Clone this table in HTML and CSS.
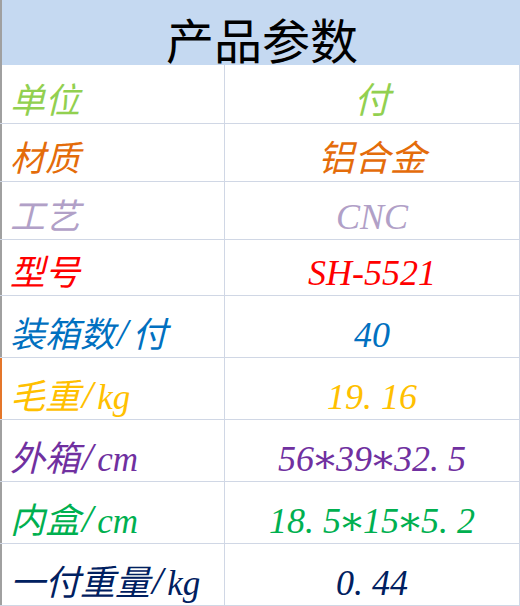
FILE: index.html
```html
<!DOCTYPE html>
<html lang="zh-CN">
<head>
<meta charset="utf-8">
<title>产品参数</title>
<link rel="stylesheet" href="styles.css">
</head>
<body>
<div class="sheet">
  <div class="head"><span class="title">产品参数</span></div>
  <div class="row r1 c-green"><div class="label">单位</div><div class="value">付</div></div>
  <div class="row c-orange"><div class="label">材质</div><div class="value">铝合金</div></div>
  <div class="row c-lav"><div class="label">工艺</div><div class="value">CNC</div></div>
  <div class="row short c-red"><div class="label">型号</div><div class="value">SH-5521</div></div>
  <div class="row tall c-blue"><div class="label">装箱数<span class="sl">/</span>付</div><div class="value">40</div></div>
  <div class="row tall c-gold sel"><div class="label">毛重<span class="sl">/</span>kg</div><div class="value">19<span class="dot">.</span>16</div></div>
  <div class="row tall c-purple"><div class="label">外箱<span class="sl">/</span>cm</div><div class="value">56<span class="ast">*</span>39<span class="ast">*</span>32<span class="dot">.</span>5</div></div>
  <div class="row tall c-emerald"><div class="label">内盒<span class="sl">/</span>cm</div><div class="value">18<span class="dot">.</span>5<span class="ast">*</span>15<span class="ast">*</span>5<span class="dot">.</span>2</div></div>
  <div class="row tall c-navy"><div class="label">一付重量<span class="sl">/</span>kg</div><div class="value">0<span class="dot">.</span>44</div></div>
</div>
</body>
</html>
```
FILE: styles.css
```css
html, body {
  margin: 0;
  padding: 0;
  background: #ffffff;
}
.sheet {
  width: 520px;
  display: flex;
  flex-direction: column;
  font-family: "Liberation Serif", "Noto Sans CJK SC", serif;
}
.head {
  height: 65px;
  box-sizing: border-box;
  border-left: 2px solid #a0a0a0;
  background: #c5d9f1;
  display: flex;
  align-items: center;
  justify-content: center;
  padding-top: 10px;
}
.title {
  font-family: "Noto Sans CJK SC", sans-serif;
  font-size: 48px;
  line-height: 1;
  color: #000000;
  font-weight: 400;
  padding-left: 2px;
}
.row {
  height: 58px;
  box-sizing: border-box;
  display: flex;
  border-bottom: 1px solid #d0d7e5;
  font-style: italic;
  font-size: 35px;
  line-height: 1;
}
.row.r1 { height: 59px; }
.row.short { height: 56px; }
.row.tall { height: 62px; }
.label {
  width: 225px;
  box-sizing: border-box;
  border-left: 2px solid #a0a0a0;
  border-right: 1px solid #d0d7e5;
  display: flex;
  align-items: flex-end;
  padding: 0 0 4px 8px;
  white-space: nowrap;
}
.row.sel .label { border-left-color: #e4762a; }
.value {
  flex: 1;
  box-sizing: border-box;
  border-right: 1px solid #d0d7e5;
  display: flex;
  align-items: flex-end;
  justify-content: center;
  padding: 0 0 4px 0;
  white-space: nowrap;
  font-size: 36px;
}
.sl {
  font-size: 40px;
  margin: 0 4px 0 2px;
}
.dot {
  margin-right: 9px;
}
.ast {
  font-family: "DejaVu Serif", serif;
  font-size: 40px;
  position: relative;
  top: 9px;
  margin: 0 1px;
}
.c-green { color: #92d050; }
.c-orange { color: #e46c0a; }
.c-lav { color: #b1a0c7; }
.c-red { color: #ff0000; }
.c-blue { color: #0070c0; }
.c-gold { color: #ffc000; }
.c-purple { color: #7030a0; }
.c-emerald { color: #00b050; }
.c-navy { color: #002060; }
```
